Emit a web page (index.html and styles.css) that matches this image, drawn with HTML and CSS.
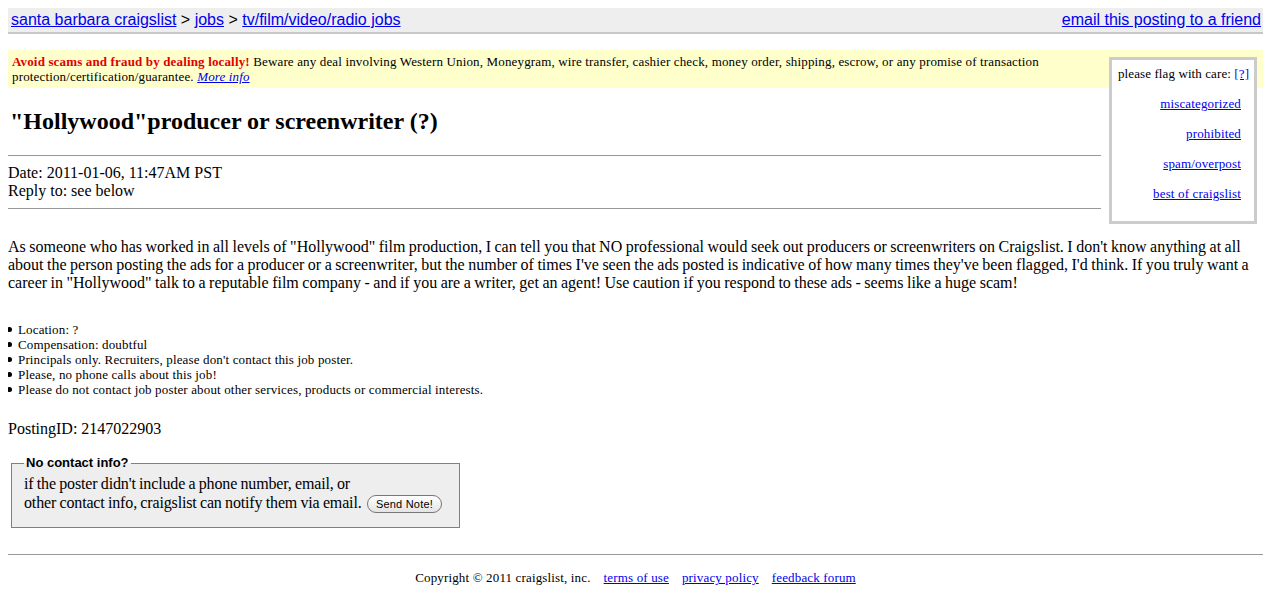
FILE: index.html
```
<!DOCTYPE html>
<html>
<head>
<meta charset="utf-8">
<title>"Hollywood"producer or screenwriter (?)</title>
<link rel="stylesheet" href="styles.css">
</head>
<body>
<div class="bchead">
  <div class="crumbs"><a href="#">santa barbara craigslist</a> &gt; <a href="#">jobs</a> &gt; <a href="#">tv/film/video/radio jobs</a></div>
  <a href="#" class="email">email this posting to a friend</a>
</div>

<div class="warning small"><div class="warntext"><b class="red">Avoid scams and fraud by dealing locally!</b> Beware any deal involving Western Union, Moneygram, wire transfer, cashier check, money order, shipping, escrow, or any promise of transaction protection/certification/guarantee. <a href="#"><i>More info</i></a></div></div>

<div class="toprow">
  <div class="maincol">
    <h2 class="title">"Hollywood"producer or screenwriter (?)</h2>
    <hr class="rule">
    <div class="meta">Date: 2011-01-06, 11:47AM PST<br>Reply to: see below</div>
    <hr class="rule rule-after">
  </div>
  <aside class="flagbox small">
    <div class="flaghead">please flag with care: <a href="#">[?]</a></div>
    <a href="#" class="flaglink">miscategorized</a>
    <a href="#" class="flaglink">prohibited</a>
    <a href="#" class="flaglink">spam/overpost</a>
    <a href="#" class="flaglink">best of craigslist</a>
  </aside>
</div>

<div class="userbody">As someone who has worked in all levels of "Hollywood" film production, I can tell you that NO professional would seek out producers or screenwriters on Craigslist. I don't know anything at all about the person posting the ads for a producer or a screenwriter, but the number of times I've seen the ads posted is indicative of how many times they've been flagged, I'd think. If you truly want a career in "Hollywood" talk to a reputable film company - and if you are a writer, get an agent! Use caution if you respond to these ads - seems like a huge scam!</div>

<ul class="facts small">
  <li>Location: ?</li>
  <li>Compensation: doubtful</li>
  <li>Principals only. Recruiters, please don't contact this job poster.</li>
  <li>Please, no phone calls about this job!</li>
  <li>Please do not contact job poster about other services, products or commercial interests.</li>
</ul>

<div class="postingid">PostingID: 2147022903</div>

<fieldset class="contact">
  <legend class="legend">No contact info?</legend>
  <div class="contacttext">if the poster didn't include a phone number, email, or<br>
  other contact info, craigslist can notify them via email. <button class="sendbtn" type="button">Send Note!</button></div>
</fieldset>

<hr class="footrule">
<div class="footer small">
  <span>Copyright © 2011 craigslist, inc.</span>
  <a href="#">terms of use</a>
  <a href="#">privacy policy</a>
  <a href="#">feedback forum</a>
</div>
</body>
</html>
```
FILE: styles.css
```
html, body {
  background: #fff;
}
body {
  margin: 8px;
  font-family: "Liberation Serif", "Times New Roman", serif;
  font-size: 16px;
  color: #000;
}
a {
  color: #0000ee;
}
.small {
  font-size: 13px;
  letter-spacing: 0.15px;
  line-height: 15px;
}
.bchead {
  display: flex;
  justify-content: space-between;
  align-items: center;
  height: 24px;
  background: #eeeeee;
  border-bottom: 2px solid #c8c8c8;
  padding: 0 2px 0 3px;
  font-family: "Liberation Sans", Arial, sans-serif;
  font-size: 16px;
}
.warning {
  margin-top: 16px;
  background: #ffffcc;
  padding: 4px;
}
.warntext {
  padding-right: 160px;
}
.red {
  color: #e00000;
}
.toprow {
  display: flex;
  align-items: flex-start;
  gap: 8px;
}
.maincol {
  flex: 1;
  min-width: 0;
}
.title {
  font-size: 24px;
  font-weight: bold;
  margin: 19px 0 0 2px;
  line-height: 28px;
}
.rule {
  border: 0;
  border-top: 1px solid #999;
  height: 0;
  margin: 20px 0 8px;
}
.meta {
  line-height: 18px;
}
.rule-after {
  margin-top: 8px;
  margin-bottom: 0;
}
.flagbox {
  position: relative;
  z-index: 1;
  width: 133px;
  margin: -31px 6px 0 0;
  background: #fff;
  border: 3px solid #cccccc;
  padding: 7px 3px 20px 6px;
  line-height: 14px;
  display: flex;
  flex-direction: column;
  align-items: flex-end;
}
.flaghead {
  align-self: flex-start;
  white-space: nowrap;
  letter-spacing: 0.1px;
}
.flaglink {
  margin-top: 16px;
  margin-right: 10px;
}
.userbody {
  margin-top: 14px;
  line-height: 18px;
  word-spacing: -0.5px;
}
.facts {
  margin: 30px 0 0 0;
  padding-left: 10px;
  list-style: none;
}
.facts li::before {
  content: "";
  display: inline-block;
  width: 5px;
  height: 5px;
  border-radius: 50%;
  background: #000;
  margin-left: -11px;
  margin-right: 6px;
  vertical-align: 2px;
}
.postingid {
  margin-top: 23px;
  line-height: 18px;
}
.contact {
  margin: 18px 0 0 3px;
  width: 423px;
  background: #eeeeee;
  border: 1px solid #808080;
  padding: 4px 12px 14px 12px;
}
.contacttext {
  line-height: 19px;
  letter-spacing: -0.15px;
  word-spacing: -0.5px;
}
.legend {
  padding: 0 2px;
  font-family: "Liberation Sans", Arial, sans-serif;
  font-weight: bold;
  font-size: 13px;
  line-height: 14px;
}
.sendbtn {
  font-family: "Liberation Sans", Arial, sans-serif;
  font-size: 11px;
  letter-spacing: 0.2px;
  height: 18px;
  padding: 0 8px;
  margin-left: 2px;
  border: 1px solid #777;
  border-radius: 9px;
  background: linear-gradient(#ffffff, #e4e4e4);
  color: #000;
  vertical-align: middle;
}
.footrule {
  border: 0;
  border-top: 1px solid #999;
  height: 0;
  margin: 26px 0 0 0;
}
.footer {
  display: flex;
  justify-content: center;
  gap: 13px;
  margin-top: 15px;
}
```
